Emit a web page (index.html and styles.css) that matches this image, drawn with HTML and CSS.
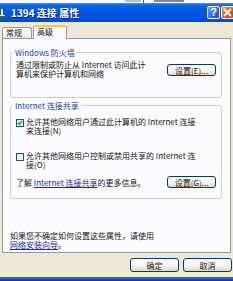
FILE: index.html
```html
<!DOCTYPE html>
<html lang="zh-CN">
<head>
<meta charset="utf-8">
<title>1394 连接 属性</title>
<link rel="stylesheet" href="styles.css">
</head>
<body>
<div class="screen">
  <div class="topstrip"><span class="ts-blue"></span><span class="ts-line"></span><span class="ts-text"></span></div>
  <div class="titlebar">
    <svg class="ticon" width="6" height="9" viewBox="0 0 6 9"><path d="M0 7h5v1H0z M1 1h2v6H1z" fill="#F3E6A6"/><path d="M0 8h6v1H0z" fill="#6B5A20"/></svg>
    <span class="ttext">1394 连接 属性</span>
    <span class="tbtn help">?</span>
    <span class="tbtn close"><svg width="9" height="9" viewBox="0 0 9 9"><path d="M1.5 1.5L7.5 7.5M7.5 1.5L1.5 7.5" stroke="#fff" stroke-width="1.8" stroke-linecap="round"/></svg></span>
  </div>
  <div class="client">
    <div class="tabs">
      <div class="tab">常规</div>
      <div class="tab active">高级</div>
    </div>
    <div class="panel">
      <fieldset class="group g1">
        <legend>Windows 防火墙</legend>
        <div class="fw-row">
          <p class="desc">通过限制或防止从 Internet 访问此计<br>算机来保护计算机和网络</p>
          <button class="btn">设置(E)...</button>
        </div>
      </fieldset>
      <fieldset class="group g2">
        <legend>Internet 连接共享</legend>
        <div class="chk">
          <span class="box"><svg width="6" height="6" viewBox="0 0 6 6"><path d="M0.8 2.8L2.3 4.4L5.2 1.1" fill="none" stroke="#21A121" stroke-width="1.4"/></svg></span>
          <span>允许其他网络用户通过此计算机的 Internet 连接<br>来连接(N)</span>
        </div>
        <div class="chk chk2">
          <span class="box"></span>
          <span>允许其他网络用户控制或禁用共享的 Internet 连<br>接(O)</span>
        </div>
        <div class="more">
          <span>了解 <a class="link">Internet 连接共享</a>的更多信息。</span>
          <button class="btn">设置(G)...</button>
        </div>
      </fieldset>
      <p class="note">如果您不确定如何设置这些属性，请使用<br><a class="link">网络安装向导</a>。</p>
    </div>
    <div class="footer">
      <button class="btn big">确定</button>
      <button class="btn big">取消</button>
    </div>
  </div>
  <div class="bottomstrip"></div>
</div>
</body>
</html>
```

FILE: styles.css
```css
* { box-sizing: border-box; }
html, body { margin: 0; padding: 0; }
body {
  width: 233px;
  height: 281px;
  overflow: hidden;
  background: #ECE9D8;
  font-family: "Noto Sans CJK SC", "Noto Sans", sans-serif;
  font-size: 8px;
  line-height: 9px;
  color: #151515;
}
.screen {
  width: 233px;
  height: 281px;
  display: flex;
  flex-direction: column;
  overflow: hidden;
}
.topstrip {
  height: 3px;
  background: #fff;
  display: flex;
  align-items: flex-start;
}
.ts-blue { margin-left: 125px; width: 16px; height: 2px; background: #A9C2EA; }
.ts-line { margin-left: 2px; width: 1px; height: 3px; background: #555; }
.ts-text { margin-left: 10px; width: 30px; height: 2px; background: #888; }

.titlebar {
  height: 19px;
  display: flex;
  align-items: center;
  background: linear-gradient(#3D8DF4 0%, #0B63E6 14%, #0056E4 50%, #0352DF 82%, #0A46BE 100%);
}
.ticon { flex: none; }
.ttext {
  flex: 1;
  margin-left: 5px;
  color: #fff;
  font-weight: 700;
  font-size: 10px;
  line-height: 12px;
  white-space: nowrap;
  text-shadow: 1px 1px 0 #0F1E7A;
}
.tbtn {
  flex: none;
  width: 13px;
  height: 13px;
  border: 1px solid #fff;
  border-radius: 2px;
  display: flex;
  align-items: center;
  justify-content: center;
  color: #fff;
}
.help {
  margin-right: 1px;
  background: linear-gradient(135deg, #6AA6FF, #2A6CEB 55%, #1A4ECF);
  font-family: "Liberation Sans", sans-serif;
  font-weight: 700;
  font-size: 11px;
  line-height: 11px;
}
.close {
  margin-right: -1px;
  background: linear-gradient(135deg, #F39A78, #E0582F 55%, #C43E1C);
}

.client {
  flex: 1;
  display: flex;
  flex-direction: column;
  padding-top: 3px;
}
.tabs {
  height: 13px;
  display: flex;
  align-items: flex-end;
  padding-left: 2px;
}
.tab {
  height: 11px;
  width: 30px;
  padding-left: 3px;
  border: 1px solid #919B9C;
  border-bottom: none;
  border-radius: 3px 3px 0 0;
  background: linear-gradient(#FFFFFF, #ECEBE5);
  white-space: nowrap;
}
.tab.active {
  height: 14px;
  width: 34px;
  margin-left: 1px;
  margin-bottom: -1px;
  border-top: 2px solid #FFC83C;
  background: #FCFCFE;
  position: relative;
  z-index: 1;
}

.panel {
  height: 215px;
  width: 229px;
  margin-left: 2px;
  border: 1px solid #919B9C;
  background: #FCFCFE;
  padding: 9px 8px 0 7px;
  display: flex;
  flex-direction: column;
}
.group {
  margin: 0;
  min-width: 0;
  border: 1px solid #D0D0BF;
  border-radius: 3px;
}
.group legend {
  padding: 0 2px;
  margin-left: -3px;
  color: #24409A;
  line-height: 9px;
  white-space: nowrap;
}
.g1 { padding: 3px 5px 19px 5px; }
.g2 { margin-top: 3px; padding: 7px 5px 10px 5px; }

.fw-row {
  display: flex;
  justify-content: space-between;
  align-items: flex-start;
}
.desc { margin: 0; white-space: nowrap; }
.fw-row .btn { margin-top: 4px; }

.chk {
  display: flex;
  align-items: flex-start;
  gap: 2px;
  white-space: nowrap;
}
.chk2 { margin-top: 16px; }
.box {
  flex: none;
  width: 8px;
  height: 8px;
  margin-top: 2px;
  border: 1px solid #1C5180;
  background: linear-gradient(135deg, #DCDCD7, #FFFFFF);
  display: flex;
  align-items: center;
  justify-content: center;
}
.more {
  margin-top: 7px;
  display: flex;
  align-items: center;
  justify-content: space-between;
  white-space: nowrap;
}
.link {
  color: #2323A8;
  text-decoration: underline;
}
.note {
  margin: 32px 0 0 0;
  white-space: nowrap;
}

.btn {
  font-family: inherit;
  font-size: 8px;
  line-height: 9px;
  color: #151515;
  width: 49px;
  height: 12px;
  padding: 0;
  border: 1px solid #003C74;
  border-radius: 3px;
  background: linear-gradient(#FFFFFF 0%, #F6F5F0 55%, #DDD9CC 100%);
  white-space: nowrap;
  flex: none;
}
.btn.big { height: 14px; }

.footer {
  margin-top: 5px;
  display: flex;
  justify-content: flex-end;
  gap: 4px;
  padding-right: 1px;
}
.bottomstrip {
  height: 4px;
  background: linear-gradient(#3A66DA, #0A2FA8);
}
```
